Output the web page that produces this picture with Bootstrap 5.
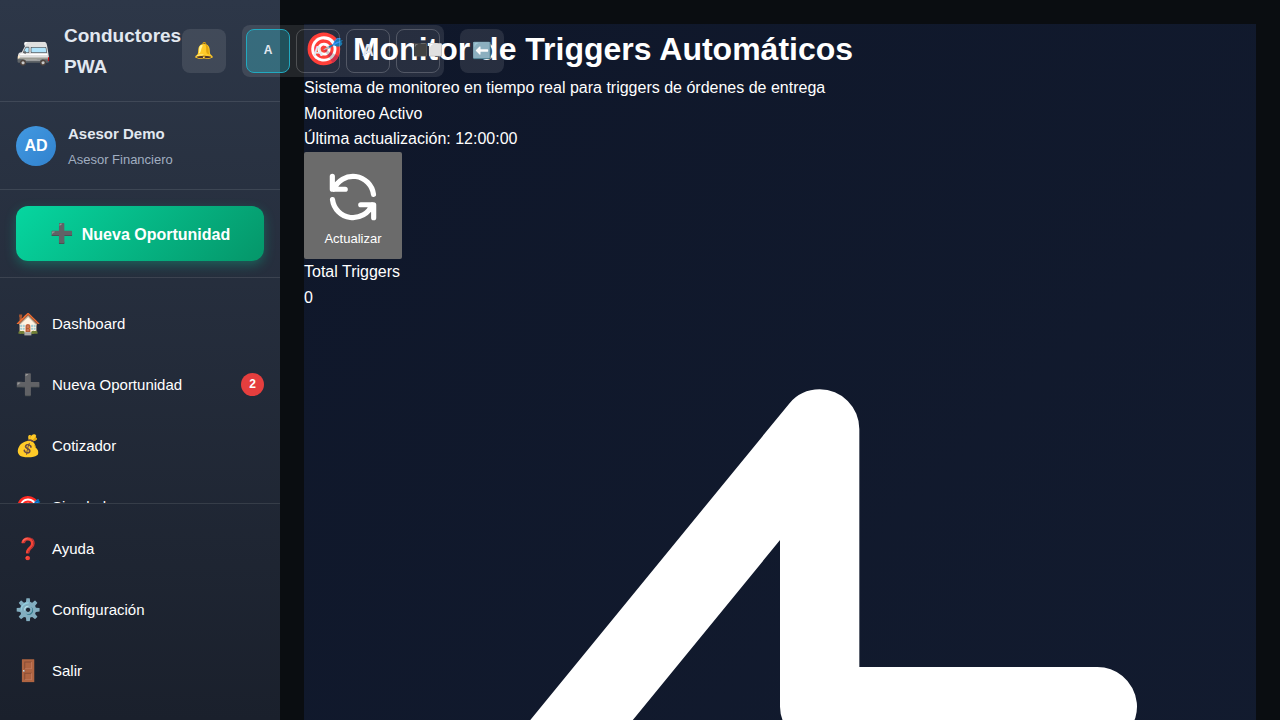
<!DOCTYPE html>
<html lang="es">
<head>
<meta charset="utf-8">
<meta name="viewport" content="width=device-width, initial-scale=1">
<title>Conductores PWA - Monitor de Triggers</title>
<link rel="stylesheet" href="https://cdn.jsdelivr.net/npm/bootstrap@5.3.0/dist/css/bootstrap.min.css">
<style>
  body { font-family: "Liberation Sans", Arial, sans-serif; font-size: 16px; line-height: 1.6; background: #0a0d11; color: #fff; }
  .sidebar { width: 280px; z-index: 1030; background: linear-gradient(180deg, #2d3748 0%, #1a202c 100%); }
  .line-b { border-bottom: 1px solid rgba(255,255,255,.1); }
  .line-t { border-top: 1px solid rgba(255,255,255,.1); }
  .side-head { padding: 20px 16px 19px; }
  .brand-icon { font-size: 28px; width: 36px; line-height: 1; }
  .brand-name { font-size: 19px; font-weight: 700; color: #e2e8f0; width: 118px; line-height: 31px; }
  .tool { width: 44px; height: 44px; border: 0; border-radius: 8px; background: rgba(255,255,255,.1); color: #e2e8f0; font-size: 16px; padding: 0; }
  .size-group { padding: 4px; gap: 6px; border-radius: 8px; background: rgba(255,255,255,.1); }
  .size-group .tool { background: transparent; border: 1px solid rgba(255,255,255,.2); font-weight: 600; }
  .size-group .tool.active { background: rgba(34,184,207,.3); border-color: #22a9c0; }
  .size-group .size-s { font-size: 12px; }
  .size-group .size-m { font-size: 14px; }
  .size-group .tool.contrast { font-size: 12px; padding: 0 16px; white-space: nowrap; }
  .profile { padding: 20px 16px 19px; }
  .avatar { width: 40px; height: 40px; background: linear-gradient(135deg, #4299e1, #3182ce); }
  .user-name { font-size: 15px; line-height: 24px; margin-bottom: 3px; color: #e2e8f0; }
  .user-role { font-size: 13px; line-height: 21px; color: #a0aec0; }
  .cta { height: 55px; padding: 8px 16px 6px; border: 0; border-radius: 12px; color: #fff; background: linear-gradient(135deg, #06d6a0, #059669); box-shadow: 0 4px 12px rgba(6,214,160,.3); }
  .cta-icon { font-size: 19px; }
  .menu { min-height: 0; padding-top: 17px; }
  .menu-end { padding: 16px 0 17px; }
  .side-link { height: 57px; margin-bottom: 4px; padding: 0 16px; gap: 12px; color: #fff; font-size: 15px; flex: none; }
  .side-icon { width: 24px; font-size: 21px; display: flex; justify-content: center; }
  .count { min-width: 23px; height: 23px; font-size: 12px; background: #e53e3e; }
  .content { padding: 24px; }
  .monitor { background: linear-gradient(135deg, #0f172a 0%, #131c30 100%); }
  .monitor h1 { font-size: 32px; font-weight: 700; line-height: 1.6; }
  .refresh { padding: 14px 18px 10px; border: 0; border-radius: 2px; background: #6b6b6b; color: #fff; font-size: 13px; line-height: 21px; }
  .refresh svg { width: 62px; height: 62px; }
</style>
</head>
<body>
<div class="d-flex align-items-start">
  <aside class="sidebar position-sticky top-0 vh-100 d-flex flex-column flex-shrink-0">
    <header class="side-head line-b d-flex align-items-center">
      <div class="d-flex align-items-center gap-2 flex-shrink-0">
        <span class="brand-icon me-1">🚐</span>
        <span class="brand-name">Conductores PWA</span>
      </div>
      <div class="d-flex align-items-center gap-3 flex-shrink-0">
        <button class="tool" type="button" aria-label="Notificaciones">🔔</button>
        <div class="size-group d-flex">
          <button class="tool active size-s" type="button">A</button>
          <button class="tool size-m" type="button">A</button>
          <button class="tool" type="button">A</button>
          <button class="tool contrast" type="button" aria-label="Contraste">⬛⬜</button>
        </div>
        <button class="tool" type="button" aria-label="Contraer">⬅️</button>
      </div>
    </header>
    <section class="profile line-b d-flex align-items-center gap-2">
      <div class="avatar rounded-circle d-flex align-items-center justify-content-center fw-bold me-1">AD</div>
      <div>
        <div class="user-name fw-bold">Asesor Demo</div>
        <div class="user-role">Asesor Financiero</div>
      </div>
    </section>
    <div class="p-3 line-b">
      <button class="cta w-100 fw-bold d-flex align-items-center justify-content-center gap-2" type="button"><span class="cta-icon">➕</span>Nueva Oportunidad</button>
    </div>
    <nav class="menu flex-grow-1 overflow-hidden d-flex flex-column">
      <a class="side-link d-flex align-items-center text-decoration-none" href="#"><span class="side-icon">🏠</span>Dashboard</a>
      <a class="side-link d-flex align-items-center text-decoration-none" href="#"><span class="side-icon">➕</span>Nueva Oportunidad<span class="count rounded-circle ms-auto fw-bold d-flex align-items-center justify-content-center">2</span></a>
      <a class="side-link d-flex align-items-center text-decoration-none" href="#"><span class="side-icon">💰</span>Cotizador</a>
      <a class="side-link d-flex align-items-center text-decoration-none" href="#"><span class="side-icon">🎯</span>Simulador</a>
    </nav>
    <div class="menu-end line-t">
      <a class="side-link d-flex align-items-center text-decoration-none" href="#"><span class="side-icon">❓</span>Ayuda</a>
      <a class="side-link d-flex align-items-center text-decoration-none" href="#"><span class="side-icon">⚙️</span>Configuración</a>
      <a class="side-link d-flex align-items-center text-decoration-none" href="#"><span class="side-icon">🚪</span>Salir</a>
    </div>
  </aside>
  <main class="content flex-grow-1">
    <div class="monitor">
      <h1 class="m-0">🎯 Monitor de Triggers Automáticos</h1>
      <p class="m-0">Sistema de monitoreo en tiempo real para triggers de órdenes de entrega</p>
      <div>Monitoreo Activo</div>
      <div>Última actualización: 12:00:00</div>
      <button class="refresh d-flex flex-column align-items-center" type="button">
        <svg viewBox="0 0 24 24" fill="none" stroke="currentColor" stroke-width="2" stroke-linecap="round" stroke-linejoin="round" aria-hidden="true"><path d="M4 4v5h.582m15.356 2A8.001 8.001 0 004.582 9m0 0H9m11 11v-5h-.581m0 0a8.003 8.003 0 01-15.357-2m15.357 2H15"/></svg>
        Actualizar
      </button>
      <div>Total Triggers</div>
      <div>0</div>
      <svg class="d-block w-100" viewBox="0 0 24 24" fill="none" stroke="currentColor" stroke-width="2" stroke-linecap="round" stroke-linejoin="round" aria-hidden="true"><path d="M13 10V3L4 14h7v7l9-11h-7z"/></svg>
    </div>
  </main>
</div>
<script src="https://cdn.jsdelivr.net/npm/bootstrap@5.3.0/dist/js/bootstrap.bundle.min.js"></script>
</body>
</html>
